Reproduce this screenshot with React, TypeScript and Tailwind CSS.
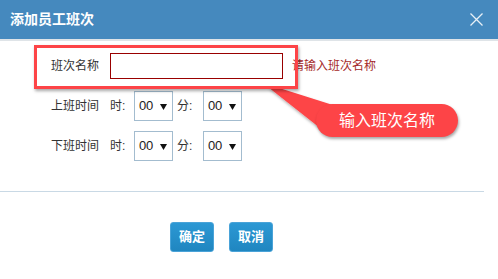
import React from "react";

const cjk = { fontFamily: '"Liberation Sans", "Noto Sans CJK SC", sans-serif' };

function Select() {
  return (
    <div className="w-[39px] h-[30px] border border-[#a3bccf] bg-white flex items-center pl-[4px] pr-[5px] justify-between">
      <span className="text-[13px] text-[#222] tracking-[-0.3px]" style={cjk}>00</span>
      <svg width="7" height="7" viewBox="0 0 7 7">
        <polygon points="0,1 7,1 3.5,7" fill="#111" />
      </svg>
    </div>
  );
}

function TimeRow({ label }: { label: string }) {
  return (
    <div className="flex items-center text-[12px] text-[#333]" style={cjk}>
      <span className="w-[59px]">{label}</span>
      <span className="w-[24px]">时:</span>
      <Select />
      <span className="w-[30px] pl-[4px]">分:</span>
      <Select />
    </div>
  );
}

export default function App() {
  return (
    <div className="relative w-[498px] h-[279px] bg-white overflow-hidden" style={cjk}>
      <div className="h-[41px] bg-[#4589be] border-b-2 border-[#dfe4e8] flex items-center justify-between pl-[10px] pr-[15px]">
        <span className="text-[14px] font-bold text-white">添加员工班次</span>
        <svg width="13" height="13" viewBox="0 0 13 13">
          <path d="M0.5 0.5 L12.5 12.5 M12.5 0.5 L0.5 12.5" stroke="#e8f0f7" strokeWidth="1.3" />
        </svg>
      </div>

      <div className="pl-[51px] pt-[12px] flex flex-col">
        <div className="flex items-center text-[12px] text-[#333]">
          <span className="w-[59px]">班次名称</span>
          <div className="w-[173px] h-[26px] border border-[#990000] bg-white" />
          <span className="ml-[9px] text-[#a52a2a]">请输入班次名称</span>
        </div>
        <div className="mt-[12px]">
          <TimeRow label="上班时间" />
        </div>
        <div className="mt-[10px]">
          <TimeRow label="下班时间" />
        </div>
      </div>

      <div className="mt-[30px] w-[484px] h-px bg-[#c9d9e5]" />

      <div className="mt-[30px] pl-[170px] flex gap-[15px]">
        <button className="w-[44px] h-[30px] rounded-[3px] border border-[#4aa3d8] bg-gradient-to-b from-[#2c98d4] to-[#1f86c0] text-white text-[13px] font-bold">
          确定
        </button>
        <button className="w-[44px] h-[30px] rounded-[3px] border border-[#4aa3d8] bg-gradient-to-b from-[#2c98d4] to-[#1f86c0] text-white text-[13px] font-bold">
          取消
        </button>
      </div>

      {/* annotation overlay */}
      <svg className="absolute left-0 top-0 pointer-events-none" width="498" height="279">
        <defs>
          <filter id="sh" x="-20%" y="-20%" width="140%" height="160%">
            <feDropShadow dx="1" dy="2" stdDeviation="1.5" floodColor="#000" floodOpacity="0.35" />
          </filter>
        </defs>
        <polygon points="268,87 276,87 336,106 320,128" fill="#fd4447" filter="url(#sh)" />
      </svg>
      <div className="absolute left-[34px] top-[45px] w-[264px] h-[44px] border-[3px] border-[#fd4447] shadow-[1px_2px_3px_rgba(0,0,0,0.35)] pointer-events-none" />
      <div className="absolute left-[316px] top-[104px] w-[142px] h-[33px] rounded-full bg-[#fd4447] shadow-[1px_2px_3px_rgba(0,0,0,0.35)] flex items-center justify-center">
        <span className="text-[16px] text-white">输入班次名称</span>
      </div>
    </div>
  );
}
